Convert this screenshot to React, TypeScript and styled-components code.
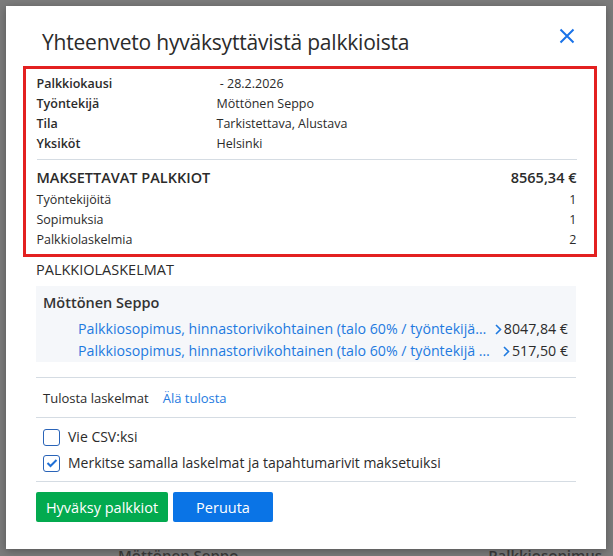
import React from "react";
import styled, { createGlobalStyle } from "styled-components";

const Global = createGlobalStyle`
  html, body { margin: 0; padding: 0; }
  body {
    background: #7b7b7b;
    font-family: "Open Sans", "Noto Sans", sans-serif;
    color: #212529;
    width: 613px;
    height: 556px;
    overflow: hidden;
  }
`;

const Page = styled.div`
  position: relative;
  width: 613px;
  height: 556px;
  overflow: hidden;
  background: #7b7b7b;
`;

const BehindText = styled.div`
  position: absolute;
  top: 545px;
  left: 0;
  right: 0;
  display: flex;
  gap: 250px;
  padding-left: 118px;
  font-size: 15px;
  font-weight: 600;
  color: #3a3a3a;
`;

const Modal = styled.div`
  position: absolute;
  left: 6px;
  top: 6px;
  width: 600px;
  height: 543px;
  background: #fff;
  box-shadow: 0 2px 8px rgba(0, 0, 0, 0.3);
  box-sizing: border-box;
  padding: 0 30px;
  display: flex;
  flex-direction: column;
`;

const Header = styled.div`
  display: flex;
  align-items: center;
  justify-content: space-between;
  height: 60px;
  padding-left: 6px;
`;

const Title = styled.h1`
  margin: 0;
  padding-top: 12px;
  font-size: 21px;
  font-weight: 400;
  color: #2b2b2b;
  letter-spacing: -0.2px;
`;

const Close = styled.button`
  border: 0;
  background: none;
  padding: 0;
  margin-right: 1px;
  cursor: pointer;
  display: flex;
`;

const Highlight = styled.div`
  margin: 0 -21px 0 -13px;
  border: 3.5px solid #e32020;
  padding: 5px 17.5px 4px 10.5px;
`;

const InfoGrid = styled.div`
  display: grid;
  grid-template-columns: 180px 1fr;
  font-size: 12.5px;
  line-height: 20px;
  padding-bottom: 5px;
  border-bottom: 1px solid #d5dce3;
`;

const Label = styled.div`
  font-weight: 600;
  color: #2b2b2b;
`;

const Value = styled.div`
  color: #2b2b2b;
`;

const SumBlock = styled.div`
  padding-top: 6px;
`;

const SumRow = styled.div<{ $big?: boolean }>`
  display: flex;
  justify-content: space-between;
  font-size: ${(p) => (p.$big ? "14.5px" : "12.5px")};
  font-weight: ${(p) => (p.$big ? 600 : 400)};
  line-height: ${(p) => (p.$big ? "24px" : "20px")};
  color: #2b2b2b;
`;

const SectionTitle = styled.div`
  font-size: 14.5px;
  font-weight: 500;
  color: #2b2b2b;
  margin-top: 2px;
  line-height: 22px;
`;

const CalcBox = styled.div`
  background: #f5f7fa;
  margin-top: 5px;
  padding: 6px 8px 0 7px;
`;

const CalcName = styled.div`
  font-size: 14.5px;
  font-weight: 600;
  color: #333;
  line-height: 22px;
  margin-bottom: 4px;
`;

const CalcLine = styled.div`
  display: flex;
  align-items: center;
  padding-left: 35px;
  font-size: 14.2px;
  line-height: 22px;
`;

const CalcLink = styled.a`
  color: #1e7ae0;
  text-decoration: none;
  white-space: nowrap;
  overflow: hidden;
  text-overflow: ellipsis;
  flex: 1;
  min-width: 0;
  margin-right: 6px;
`;

const Chevron = styled.svg`
  flex: none;
  margin-right: 2px;
`;

const Amount = styled.span`
  color: #2b2b2b;
  flex: none;
  text-align: right;
`;

const Divider = styled.div<{ $gap?: number }>`
  border-top: 1px solid #d5dce3;
  margin-top: ${(p) => p.$gap ?? 0}px;
`;

const PrintRow = styled.div`
  display: flex;
  gap: 14px;
  font-size: 13px;
  line-height: 20px;
  padding: 10px 7px 9px;
  color: #2b2b2b;
`;

const Link = styled.a`
  color: #1e7ae0;
  text-decoration: none;
`;

const CheckList = styled.div`
  display: flex;
  flex-direction: column;
  gap: 6px;
  padding: 9px 7px 8px;
`;

const CheckRow = styled.label`
  display: flex;
  align-items: center;
  gap: 8px;
  font-size: 14px;
  color: #2b2b2b;
  line-height: 20px;
`;

const Box = styled.span`
  width: 15px;
  height: 15px;
  border: 1.5px solid #2a64b8;
  border-radius: 3px;
  display: flex;
  align-items: center;
  justify-content: center;
  background: #fff;
`;

const Buttons = styled.div`
  display: flex;
  gap: 5px;
  padding-top: 10px;
`;

const Btn = styled.button<{ $variant: "green" | "blue"; $w: number }>`
  border: 0;
  border-radius: 2px;
  height: 30px;
  width: ${(p) => p.$w}px;
  color: #fff;
  font-family: inherit;
  font-size: 14.5px;
  background: ${(p) => (p.$variant === "green" ? "#03aa4f" : "#0a74e6")};
  cursor: pointer;
`;

const Chev = () => (
  <Chevron width="7" height="11" viewBox="0 0 7 11">
    <path d="M1 1 L5.5 5.5 L1 10" stroke="#1e7ae0" strokeWidth="1.6" fill="none" />
  </Chevron>
);

export default function App() {
  return (
    <Page>
      <Global />
      <BehindText>
        <span>Möttönen Seppo</span>
        <span>Palkkiosopimus</span>
      </BehindText>
      <Modal>
        <Header>
          <Title>Yhteenveto hyväksyttävistä palkkioista</Title>
          <Close aria-label="Sulje">
            <svg width="16" height="16" viewBox="0 0 16 16">
              <path d="M1.5 1.5 L14.5 14.5 M14.5 1.5 L1.5 14.5" stroke="#1a73e8" strokeWidth="2" fill="none" />
            </svg>
          </Close>
        </Header>
        <Highlight>
          <InfoGrid>
            <Label>Palkkiokausi</Label>
            <Value>&nbsp;- 28.2.2026</Value>
            <Label>Työntekijä</Label>
            <Value>Möttönen Seppo</Value>
            <Label>Tila</Label>
            <Value>Tarkistettava, Alustava</Value>
            <Label>Yksiköt</Label>
            <Value>Helsinki</Value>
          </InfoGrid>
          <SumBlock>
            <SumRow $big>
              <span>MAKSETTAVAT PALKKIOT</span>
              <span>8565,34 €</span>
            </SumRow>
            <SumRow>
              <span>Työntekijöitä</span>
              <span>1</span>
            </SumRow>
            <SumRow>
              <span>Sopimuksia</span>
              <span>1</span>
            </SumRow>
            <SumRow>
              <span>Palkkiolaskelmia</span>
              <span>2</span>
            </SumRow>
          </SumBlock>
        </Highlight>
        <SectionTitle>PALKKIOLASKELMAT</SectionTitle>
        <CalcBox>
          <CalcName>Möttönen Seppo</CalcName>
          <CalcLine>
            <CalcLink href="#">Palkkiosopimus, hinnastorivikohtainen (talo 60% / työntekijä 40%)</CalcLink>
            <Chev />
            <Amount>8047,84 €</Amount>
          </CalcLine>
          <CalcLine>
            <CalcLink href="#">Palkkiosopimus, hinnastorivikohtainen (talo 60% / työntekijä 40%)</CalcLink>
            <Chev />
            <Amount>517,50 €</Amount>
          </CalcLine>
        </CalcBox>
        <Divider $gap={15} />
        <PrintRow>
          <span>Tulosta laskelmat</span>
          <Link href="#">Älä tulosta</Link>
        </PrintRow>
        <Divider />
        <CheckList>
          <CheckRow>
            <Box />
            Vie CSV:ksi
          </CheckRow>
          <CheckRow>
            <Box>
              <svg width="12" height="10" viewBox="0 0 12 10">
                <path d="M1.5 5 L4.5 8 L10.5 2" stroke="#1e6fd6" strokeWidth="2" fill="none" />
              </svg>
            </Box>
            Merkitse samalla laskelmat ja tapahtumarivit maksetuiksi
          </CheckRow>
        </CheckList>
        <Divider />
        <Buttons>
          <Btn $variant="green" $w={132}>Hyväksy palkkiot</Btn>
          <Btn $variant="blue" $w={100}>Peruuta</Btn>
        </Buttons>
      </Modal>
    </Page>
  );
}
